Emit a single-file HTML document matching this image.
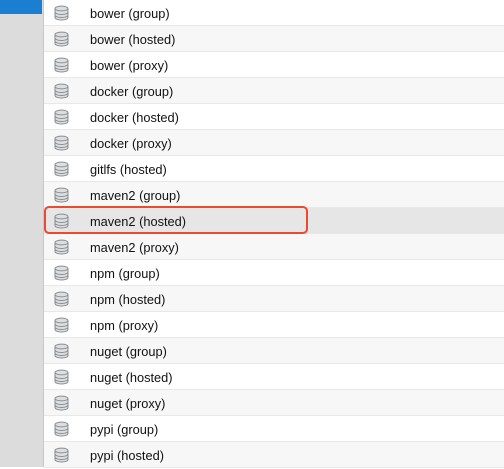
<!DOCTYPE html><html><head><style>
body{margin:0;width:504px;height:467px;overflow:hidden;background:#fff;font-family:"Liberation Sans",sans-serif;position:relative}
.side{position:absolute;left:0;top:0;width:43px;height:467px;background:#dcdcdc;border-right:1px solid #c8c8c8}
.blue{position:absolute;left:0;top:0;width:42px;height:14px;background:#1a7fd0}
.row{position:absolute;left:44px;width:460px;height:25px;border-bottom:1px solid #e8e8e8;font-size:12.8px;color:#111;line-height:27px}
.row span{position:absolute;left:46px}
.row svg{position:absolute;left:10px;top:5px}
.box{position:absolute;left:44px;top:206px;width:260px;height:24px;border:2px solid #ea4a2f;border-radius:5px}
</style></head><body>
<div class="side"></div><div class="blue"></div>
<div id="l"></div>
<script>
var n=["bower (group)","bower (hosted)","bower (proxy)","docker (group)","docker (hosted)","docker (proxy)","gitlfs (hosted)","maven2 (group)","maven2 (hosted)","maven2 (proxy)","npm (group)","npm (hosted)","npm (proxy)","nuget (group)","nuget (hosted)","nuget (proxy)","pypi (group)","pypi (hosted)"];
var h="";n.forEach(function(t,i){h+='<div class="row" style="top:'+(i*26)+'px;background:'+(i==8?'#e6e6e6':(i%2?'#f7f7f7':'#fff'))+'"><svg width="15" height="16" viewBox="0 0 15 16"><g fill="#dcdee0" stroke="#8a8d90" stroke-width="1"><path d="M1 3.5v9c0 1.5 2.9 2.5 6.5 2.5s6.5-1 6.5-2.5v-9"/><ellipse cx="7.5" cy="3.5" rx="6.5" ry="2.4"/><path d="M1 7c0 1.5 2.9 2.5 6.5 2.5S14 8.5 14 7M1 10c0 1.5 2.9 2.5 6.5 2.5S14 11.5 14 10" fill="none"/></g></svg><span>'+t+'</span></div>'});
document.getElementById("l").innerHTML=h;
</script>
<div class="box"></div>
</body></html>
